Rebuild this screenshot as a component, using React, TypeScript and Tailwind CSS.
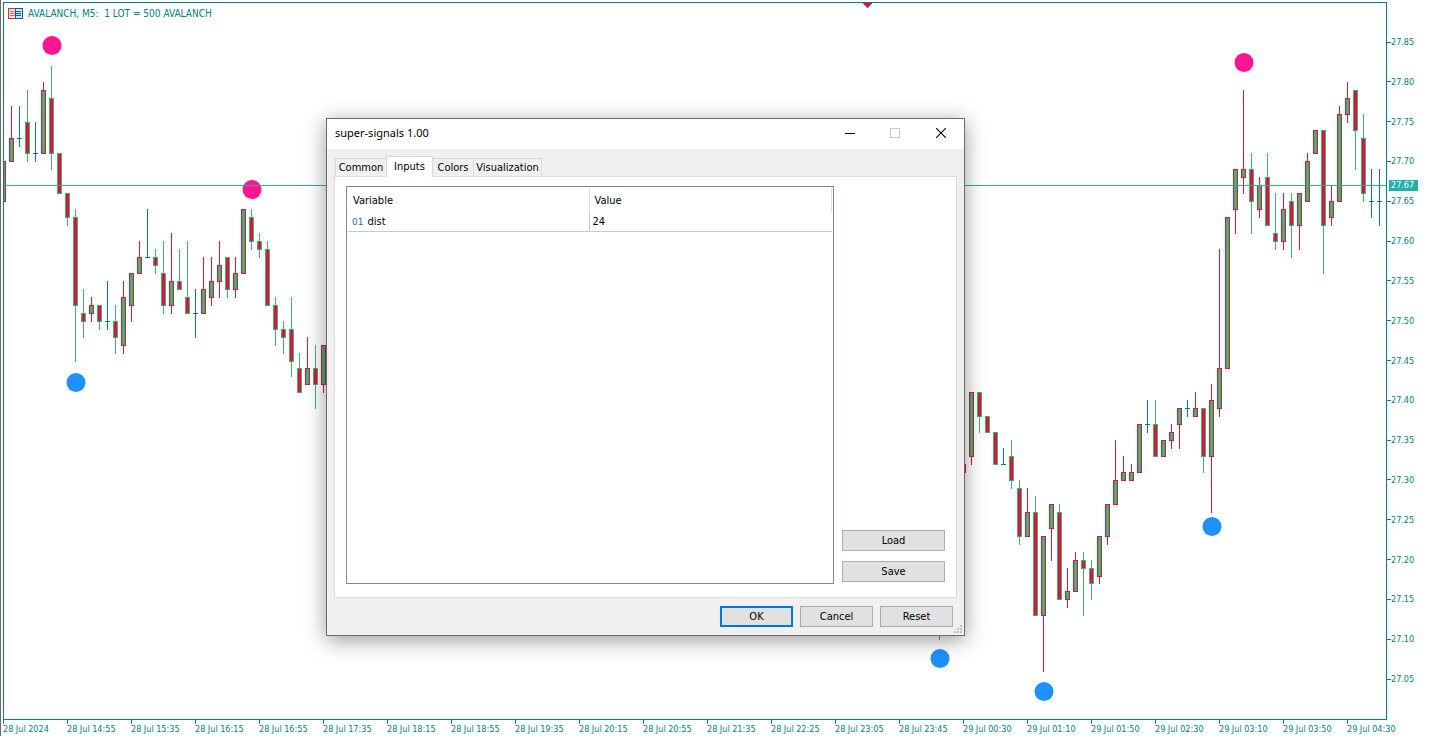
import { clsx } from 'clsx';

type Candle = [slot: number, open: number, high: number, low: number, close: number];

const CANDLES: Candle[] = [
  [0, 2765, 2770, 2765, 2770],
  [1, 2770, 2777, 2770, 2773],
  [2, 2773, 2777, 2772, 2773],
  [3, 2775, 2779, 2770, 2771],
  [4, 2771, 2775, 2770, 2771],
  [5, 2771, 2780, 2771, 2779],
  [6, 2778, 2782, 2769, 2771],
  [7, 2771, 2771, 2766, 2766],
  [8, 2766, 2766, 2762, 2763],
  [9, 2763, 2764, 2745, 2752],
  [10, 2751, 2754, 2748, 2750],
  [11, 2751, 2753, 2750, 2752],
  [12, 2752, 2752, 2749, 2750],
  [13, 2750, 2755, 2749, 2750],
  [14, 2750, 2752, 2746, 2748],
  [15, 2747, 2755, 2746, 2753],
  [16, 2752, 2756, 2750, 2756],
  [17, 2756, 2760, 2756, 2758],
  [18, 2758, 2764, 2758, 2758],
  [19, 2758, 2759, 2756, 2757],
  [20, 2756, 2760, 2751, 2752],
  [21, 2752, 2761, 2751, 2755],
  [22, 2755, 2759, 2754, 2754],
  [23, 2753, 2760, 2751, 2751],
  [24, 2751, 2754, 2748, 2751],
  [25, 2751, 2758, 2751, 2754],
  [26, 2753, 2758, 2752, 2755],
  [27, 2755, 2760, 2753, 2757],
  [28, 2758, 2758, 2753, 2754],
  [29, 2754, 2758, 2753, 2756],
  [30, 2756, 2764, 2756, 2764],
  [31, 2763, 2764, 2759, 2760],
  [32, 2760, 2761, 2758, 2759],
  [33, 2759, 2760, 2752, 2752],
  [34, 2752, 2753, 2747, 2749],
  [35, 2749, 2750, 2746, 2748],
  [36, 2749, 2753, 2743, 2745],
  [37, 2744, 2746, 2741, 2741],
  [38, 2742, 2748, 2742, 2744],
  [39, 2744, 2747, 2739, 2742],
  [40, 2742, 2747, 2741, 2747],
  [117, 2716, 2718, 2710, 2713],
  [120, 2731, 2732, 2731, 2732],
  [121, 2733, 2741, 2732, 2741],
  [122, 2741, 2741, 2736, 2738],
  [123, 2738, 2738, 2736, 2736],
  [124, 2736, 2736, 2732, 2732],
  [125, 2732, 2734, 2732, 2732],
  [126, 2733, 2735, 2729, 2730],
  [127, 2729, 2730, 2722, 2723],
  [128, 2723, 2729, 2723, 2726],
  [129, 2726, 2728, 2713, 2713],
  [130, 2713, 2723, 2706, 2723],
  [131, 2724, 2727, 2720, 2727],
  [132, 2726, 2727, 2715, 2715],
  [133, 2715, 2719, 2714, 2716],
  [134, 2716, 2721, 2716, 2720],
  [135, 2720, 2721, 2713, 2719],
  [136, 2719, 2720, 2715, 2717],
  [137, 2718, 2723, 2717, 2723],
  [138, 2723, 2727, 2722, 2727],
  [139, 2727, 2735, 2727, 2730],
  [140, 2730, 2733, 2730, 2731],
  [141, 2730, 2732, 2730, 2731],
  [142, 2731, 2737, 2731, 2737],
  [143, 2737, 2740, 2736, 2737],
  [144, 2737, 2740, 2733, 2733],
  [145, 2733, 2735, 2733, 2735],
  [146, 2735, 2737, 2734, 2736],
  [147, 2737, 2739, 2734, 2739],
  [148, 2739, 2740, 2738, 2739],
  [149, 2738, 2741, 2738, 2739],
  [150, 2739, 2739, 2731, 2733],
  [151, 2733, 2742, 2726, 2740],
  [152, 2739, 2759, 2738, 2744],
  [153, 2744, 2763, 2744, 2763],
  [154, 2764, 2769, 2761, 2769],
  [155, 2768, 2779, 2766, 2769],
  [156, 2769, 2771, 2761, 2765],
  [157, 2764, 2768, 2763, 2767],
  [158, 2768, 2771, 2762, 2762],
  [159, 2761, 2766, 2759, 2760],
  [160, 2760, 2766, 2759, 2764],
  [161, 2765, 2766, 2758, 2762],
  [162, 2762, 2766, 2759, 2766],
  [163, 2765, 2771, 2765, 2770],
  [164, 2771, 2774, 2771, 2774],
  [165, 2774, 2774, 2756, 2762],
  [166, 2763, 2767, 2762, 2765],
  [167, 2765, 2777, 2765, 2776],
  [168, 2776, 2780, 2775, 2778],
  [169, 2779, 2779, 2769, 2774],
  [170, 2773, 2776, 2765, 2766],
  [171, 2765, 2769, 2763, 2765],
  [172, 2765, 2769, 2762, 2765],
];

const SIGNALS = [
  { x: 52, y: 45, sell: true },
  { x: 252, y: 189, sell: true },
  { x: 1244, y: 62, sell: true },
  { x: 76, y: 382, sell: false },
  { x: 940, y: 658, sell: false },
  { x: 1044, y: 691, sell: false },
  { x: 1212, y: 526, sell: false },
];

const PRICES = [
  '27.85', '27.80', '27.75', '27.70', '27.65', '27.60', '27.55', '27.50', '27.45',
  '27.40', '27.35', '27.30', '27.25', '27.20', '27.15', '27.10', '27.05',
];

const TIMES = [
  '28 Jul 2024', '28 Jul 14:55', '28 Jul 15:35', '28 Jul 16:15', '28 Jul 16:55', '28 Jul 17:35',
  '28 Jul 18:15', '28 Jul 18:55', '28 Jul 19:35', '28 Jul 20:15', '28 Jul 20:55', '28 Jul 21:35',
  '28 Jul 22:25', '28 Jul 23:05', '28 Jul 23:45', '29 Jul 00:30', '29 Jul 01:10', '29 Jul 01:50',
  '29 Jul 02:30', '29 Jul 03:10', '29 Jul 03:50', '29 Jul 04:30',
];

const TABS = ['Common', 'Inputs', 'Colors', 'Visualization'];

const toX = (slot: number) => 3 + slot * 8;
const toY = (cents: number) => Math.round(42 + (2785 - cents) * 7.963);

function CandleShape({ candle }: { candle: Candle }) {
  const [slot, open, high, low, close] = candle;
  const x = toX(slot);
  const top = toY(Math.max(open, close));
  const bottom = toY(Math.min(open, close));

  if (open === close) {
    return (
      <g fill="#008080">
        <rect x={x} y={toY(high)} width={1} height={toY(low) - toY(high) + 1} />
        <rect x={x - 2} y={top} width={5} height={1} />
      </g>
    );
  }

  const line = close > open ? '#dc143c' : '#3cb371';
  const fill = close > open ? '#3cb371' : '#dc143c';
  return (
    <g>
      <rect x={x} y={toY(high)} width={1} height={toY(low) - toY(high) + 1} fill={line} />
      <rect x={x - 2} y={top} width={5} height={bottom - top + 1} fill={line} />
      <rect x={x - 1} y={top + 1} width={3} height={bottom - top - 1} fill={fill} />
    </g>
  );
}

function Plot() {
  return (
    <svg
      className="block h-full w-full"
      viewBox="4 3 1382 716"
      preserveAspectRatio="none"
      shapeRendering="crispEdges"
      aria-label="AVALANCH M5 candles"
    >
      {CANDLES.map((candle) => (
        <CandleShape key={candle[0]} candle={candle} />
      ))}
      {SIGNALS.map(({ x, y, sell }) => (
        <circle key={x} cx={x} cy={y + 0.5} r={9.5} fill={sell ? '#ff1493' : '#1e90ff'} shapeRendering="auto" />
      ))}
      <rect x={4} y={185} width={1382} height={1} fill="#20b2aa" />
      <path d="M862 3h10l-5 5z" fill="#dc143c" />
    </svg>
  );
}

function BookIcon() {
  return (
    <svg className="h-[11px] w-[15px]" viewBox="0 0 15 11" shapeRendering="crispEdges" aria-hidden="true">
      <path d="M.5.5h7v10h-7z" fill="#fde8e4" stroke="#d8322e" />
      <path d="M7.5.5h7v10h-7z" fill="#cdeafa" stroke="#0a5a9c" />
      <path d="M2 3.5h5M2 5.5h5M2 7.5h5" stroke="#e0655c" />
      <path d="M8 3.5h5M8 5.5h5M8 7.5h5" stroke="#0a5a9c" />
    </svg>
  );
}

function PriceAxis() {
  return (
    <div className="relative flex flex-col justify-between pt-9 pb-[35px]">
      {PRICES.map((price) => (
        <div key={price} className="flex h-3 items-center">
          <span className="h-px w-1 shrink-0 bg-[#008080]" />
          <span>{price}</span>
        </div>
      ))}
      <span className="absolute top-[180px] left-[2px] h-[11px] w-[29px] bg-[#20b2aa] pl-[2px] leading-[11px] text-white">
        27.67
      </span>
    </div>
  );
}

function TimeAxis() {
  return (
    <div className="flex h-4 overflow-hidden pl-[3px]">
      {TIMES.map((time) => (
        <div key={time} className="flex w-16 shrink-0 flex-col">
          <span className="h-1 w-px bg-[#008080]" />
          <span className="leading-[10px] whitespace-nowrap">{time}</span>
        </div>
      ))}
    </div>
  );
}

function DialogButton({ label, primary, className }: { label: string; primary?: boolean; className: string }) {
  return (
    <button
      type="button"
      className={clsx(
        'flex h-[21px] items-center justify-center bg-[#e1e1e1] pt-px',
        primary ? 'border-2 border-[#0078d7]' : 'border border-[#adadad]',
        className,
      )}
    >
      {label}
    </button>
  );
}

function TitleBar() {
  return (
    <header className="flex h-[30px] items-center bg-white pb-[2px] pl-2">
      <h1 className="flex-1 font-['Noto_Sans',sans-serif] text-[11px] leading-4">super-signals 1.00</h1>
      <button type="button" aria-label="Minimize" className="flex h-full w-[45px] items-center justify-center">
        <svg className="size-[10px]" viewBox="0 0 10 10" shapeRendering="crispEdges">
          <path d="M0 5.5h10" stroke="#000" />
        </svg>
      </button>
      <button type="button" aria-label="Maximize" disabled className="flex h-full w-[45px] items-center justify-center">
        <svg className="size-[10px]" viewBox="0 0 10 10" shapeRendering="crispEdges">
          <path d="M.5.5h9v9h-9z" fill="none" stroke="#c8c8c8" />
        </svg>
      </button>
      <button type="button" aria-label="Close" className="flex h-full w-[47px] items-center justify-center">
        <svg className="size-[10px]" viewBox="0 0 10 10">
          <path d="M0 0l10 10M10 0L0 10" stroke="#000" strokeWidth="1.1" />
        </svg>
      </button>
    </header>
  );
}

function InputsTable() {
  return (
    <div className="h-[398px] flex-1 border border-[#828790] bg-white p-px">
      <table className="w-full table-fixed border-collapse text-left">
        <thead>
          <tr className="h-6">
            <th className="w-[241px] border-r border-[#e0e0e0] pt-[2px] pl-[5px] font-normal">Variable</th>
            <th className="border-r border-[#e0e0e0] pt-[2px] pl-[5px] font-normal">Value</th>
          </tr>
        </thead>
        <tbody>
          <tr className="h-[19px] border-b border-[#c8c8c8]">
            <td className="border-r border-[#c8c8c8] pt-[2px] pl-1">
              <span className="mr-1 font-['DejaVu_Sans',sans-serif] text-[9px] text-[#1a6fa8]">01</span>
              dist
            </td>
            <td className="pt-[2px] pl-[3px]">24</td>
          </tr>
        </tbody>
      </table>
    </div>
  );
}

function SettingsDialog() {
  return (
    <section
      role="dialog"
      aria-label="super-signals 1.00"
      className="absolute top-[118px] left-[325px] w-[639px] border border-[#6b6b6b] bg-[#f0f0f0] text-[11px] leading-[14px] text-black shadow-[0_4px_20px_rgba(0,0,0,0.4)]"
    >
      <TitleBar />
      <div className="px-[7px] pt-[7px]">
        <div role="tablist" className="flex items-end pl-px">
          {TABS.map((tab) => (
            <button
              key={tab}
              type="button"
              role="tab"
              aria-selected={tab === 'Inputs'}
              className={clsx(
                'flex items-center justify-center border border-b-0 border-[#d9d9d9]',
                tab === 'Inputs' ? 'relative -mb-px h-[21px] w-[47px] bg-white' : 'h-[18px] pt-px',
                tab === 'Common' && 'w-[51px] border-r-0',
                tab === 'Colors' && 'w-10 border-x-0',
                tab === 'Visualization' && 'w-[69px]',
              )}
            >
              {tab}
            </button>
          ))}
        </div>
        <div role="tabpanel" className="flex gap-2 border border-[#dcdcdc] bg-white pt-[9px] pr-[11px] pb-[13px] pl-[11px]">
          <InputsTable />
          <div className="flex w-[103px] flex-col justify-end gap-[10px] pb-[2px]">
            <DialogButton label="Load" className="w-full" />
            <DialogButton label="Save" className="w-full" />
          </div>
        </div>
      </div>
      <footer className="flex justify-end gap-[7px] pt-2 pr-[11px] pb-2">
        <DialogButton label="OK" primary className="w-[73px]" />
        <DialogButton label="Cancel" className="w-[73px]" />
        <DialogButton label="Reset" className="w-[73px]" />
      </footer>
      <svg className="absolute right-[2px] bottom-[2px] size-2" viewBox="0 0 8 8" shapeRendering="crispEdges" aria-hidden="true">
        <path d="M6 0h2v2H6zM3 3h2v2H3zM6 3h2v2H6zM0 6h2v2H0zM3 6h2v2H3zM6 6h2v2H6z" fill="#bfbfbf" />
      </svg>
    </section>
  );
}

export default function App() {
  return (
    <main className="relative flex h-screen flex-col overflow-hidden border-l border-[#696969] bg-white font-['DejaVu_Sans_Condensed','DejaVu_Sans',sans-serif] text-[9px] leading-3 text-[#008080]">
      <div className="-ml-px flex min-h-0 flex-1 flex-col">
        <div className="grid min-h-0 flex-1 grid-cols-[1fr_42px]">
          <div className="relative mt-[2px] ml-[3px] min-h-0 border border-[#008080]">
            <Plot />
            <div className="absolute top-[5px] left-1 flex items-center gap-[5px] text-[10px] leading-[11px]">
              <BookIcon />
              <span className="whitespace-pre">AVALANCH, M5:  1 LOT = 500 AVALANCH</span>
            </div>
          </div>
          <PriceAxis />
        </div>
        <TimeAxis />
      </div>
      <SettingsDialog />
    </main>
  );
}
